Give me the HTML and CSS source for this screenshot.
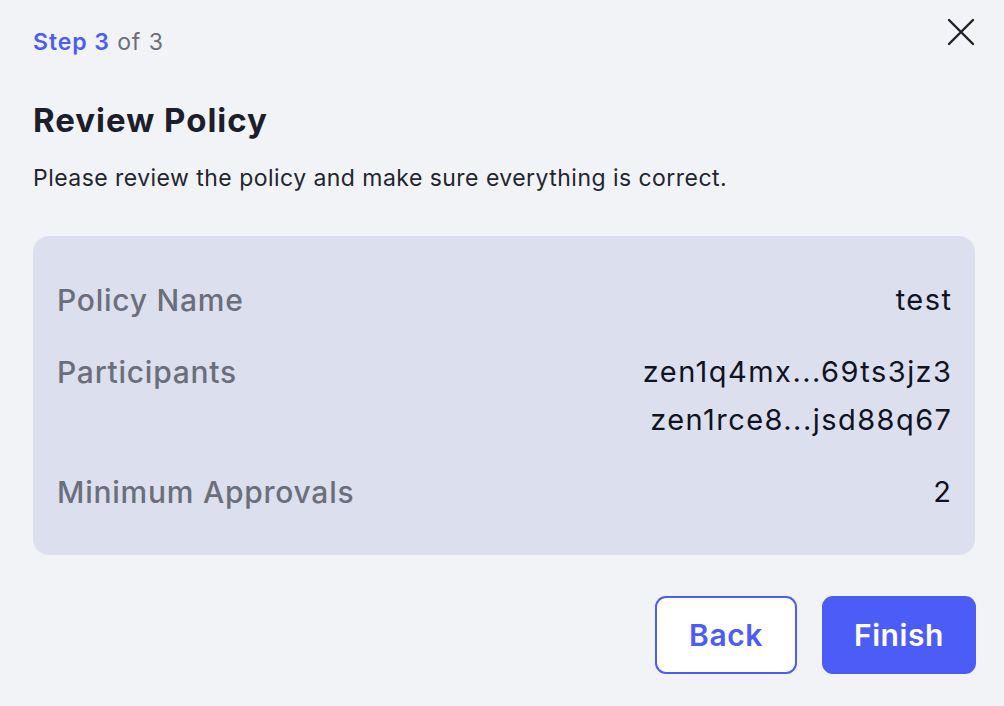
FILE: index.html
```html
<!DOCTYPE html>
<html>
<head>
<meta charset="utf-8">
<link rel="stylesheet" href="styles.css">
</head>
<body>
<div class="modal">
  <div class="top">
    <div class="step"><span class="step-cur">Step 3</span> <span class="step-of">of 3</span></div>
    <button class="close" aria-label="Close">
      <svg width="28" height="28" viewBox="0 0 28 28"><path d="M2 2 L26 26 M26 2 L2 26" stroke="#1d1f2a" stroke-width="2.4" stroke-linecap="round" fill="none"/></svg>
    </button>
  </div>
  <h1 class="title">Review Policy</h1>
  <p class="desc">Please review the policy and make sure everything is correct.</p>
  <div class="card">
    <div class="row">
      <div class="label">Policy Name</div>
      <div class="value">test</div>
    </div>
    <div class="row">
      <div class="label">Participants</div>
      <div class="value"><div>zen1q4mx...69ts3jz3</div><div>zen1rce8...jsd88q67</div></div>
    </div>
    <div class="row">
      <div class="label">Minimum Approvals</div>
      <div class="value">2</div>
    </div>
  </div>
  <div class="actions">
    <button class="btn btn-back">Back</button>
    <button class="btn btn-finish">Finish</button>
  </div>
</div>
</body>
</html>
```

FILE: styles.css
```css
* { box-sizing: border-box; }
html, body { margin: 0; padding: 0; }
body {
  background: #f2f3f7;
  font-family: Inter, "Noto Sans", sans-serif;
  width: 1004px;
  height: 706px;
  overflow: hidden;
}
.modal {
  padding: 22px 29px 0 33px;
}
.top {
  display: flex;
  justify-content: space-between;
  align-items: flex-start;
}
.step {
  font-size: 23px;
  letter-spacing: 0.04em;
  line-height: 40px;
}
.step-cur { color: #4c5cf6; font-weight: 600; }
.step-of { color: #6b6f7b; }
.close {
  background: none;
  border: 0;
  padding: 0;
  margin-top: -4px;
  width: 28px;
  height: 28px;
  cursor: pointer;
}
.title {
  margin: 36px 0 0;
  font-size: 33px;
  letter-spacing: 0.03em;
  font-weight: 700;
  line-height: 44px;
  color: #1c1f2b;
}
.desc {
  margin: 20px 0 0;
  font-size: 23px;
  letter-spacing: 0.02em;
  line-height: 32px;
  color: #23252f;
}
.card {
  margin: 42px 0 0;
  width: 942px;
  background: #dcdfed;
  border-radius: 16px;
  padding: 40px 24px 39px;
  display: flex;
  flex-direction: column;
  gap: 24px;
}
.row {
  display: flex;
  justify-content: space-between;
  align-items: flex-start;
}
.label {
  font-size: 30px;
  letter-spacing: 0.025em;
  font-weight: 500;
  line-height: 48px;
  color: #6b6f7b;
}
.value {
  font-size: 29px;
  letter-spacing: 0.05em;
  margin-right: -0.05em;
  line-height: 48px;
  color: #101322;
  text-align: right;
}
.actions {
  width: 943px;
  display: flex;
  justify-content: flex-end;
  gap: 25px;
  margin-top: 41px;
}
.btn {
  height: 78px;
  border-radius: 11px;
  font-family: Inter, "Noto Sans", sans-serif;
  font-size: 30px;
  letter-spacing: 0.02em;
  font-weight: 600;
  cursor: pointer;
}
.btn-back {
  width: 142px;
  background: #ffffff;
  color: #4c5cf6;
  border: 2px solid #4c5cf6;
}
.btn-finish {
  width: 154px;
  background: #4c5cf6;
  color: #ffffff;
  border: 0;
}
```
